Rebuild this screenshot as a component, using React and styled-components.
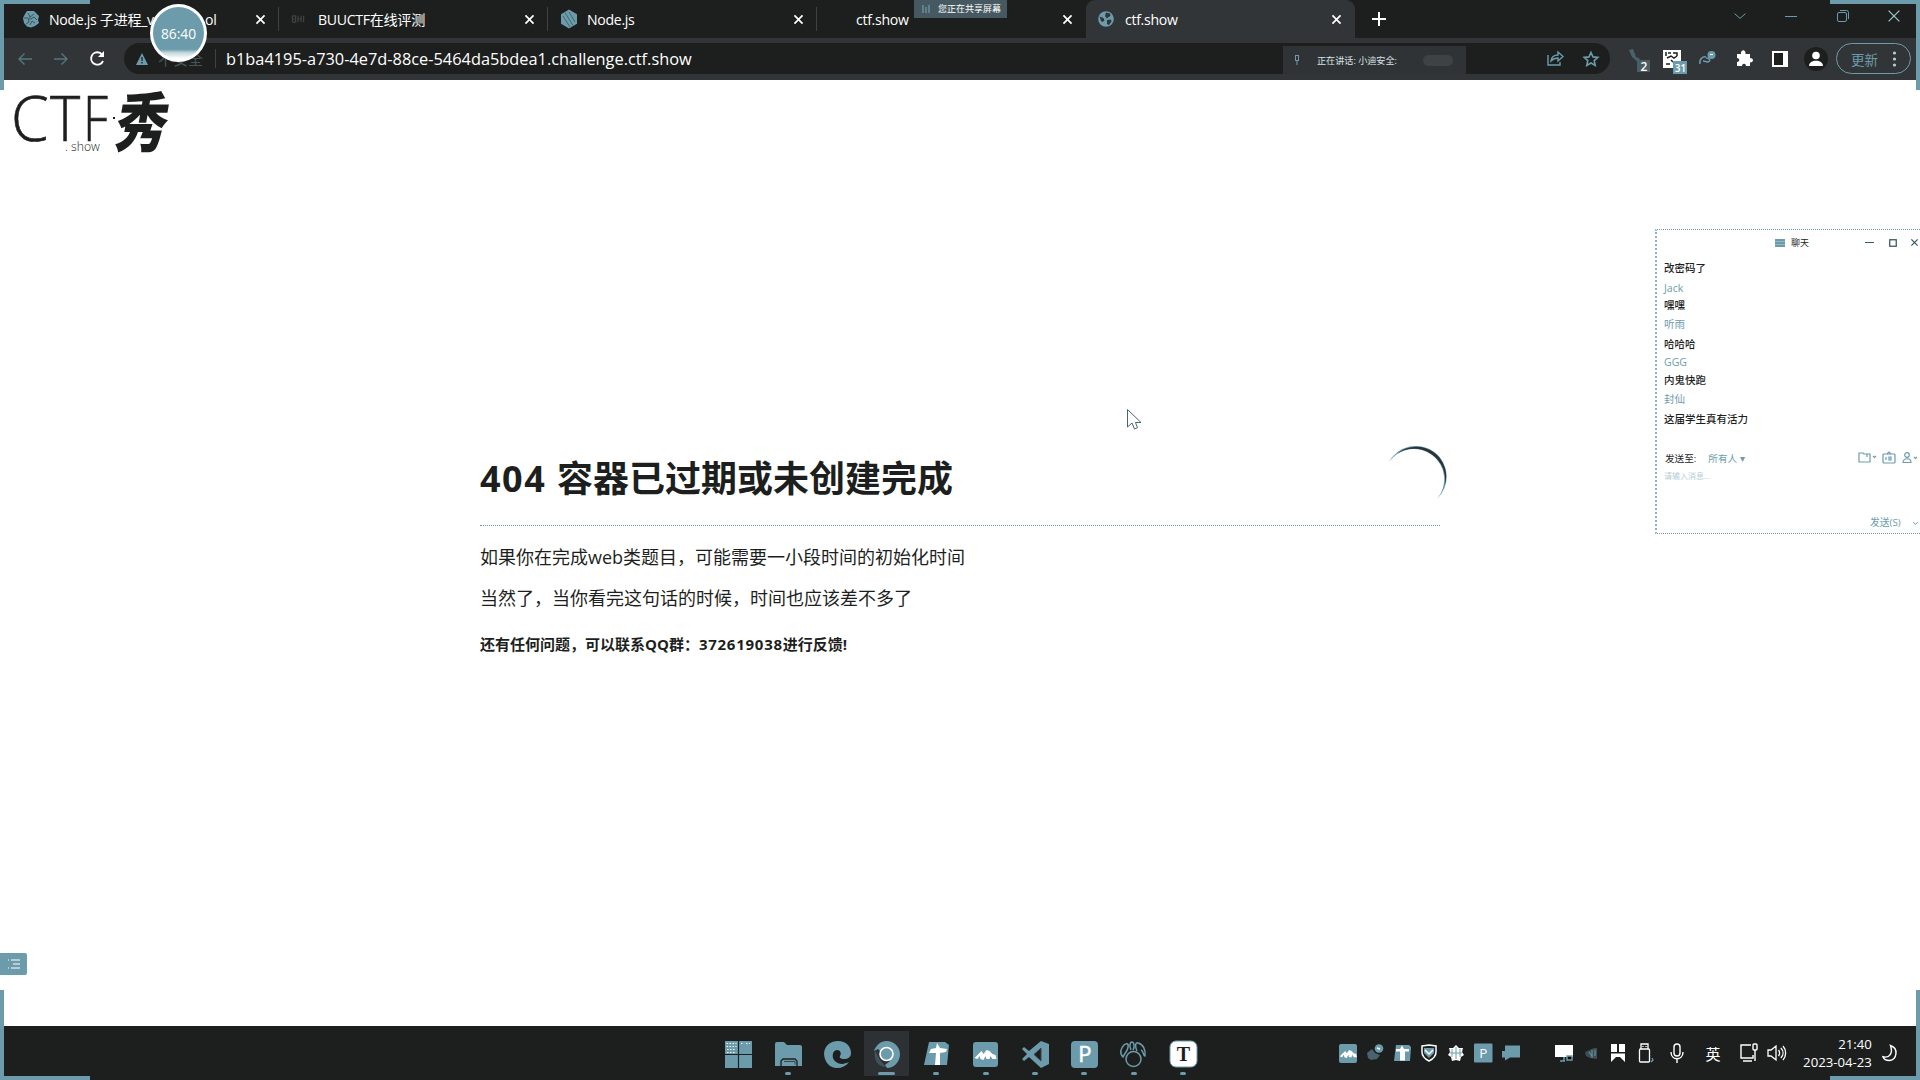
import React from "react";
import styled, { createGlobalStyle } from "styled-components";

const ink = "#1d1f1e";
const grey = "#323537";
const mid = "#3e4245";
const blue = "#6c9cac";
const ui = `"Open Sans", "Noto Sans", "Noto Sans CJK SC", sans-serif`;

const Global = createGlobalStyle`
  * { box-sizing: border-box; }
  html, body { margin: 0; background: #fff; overflow: hidden; }
  body { font-family: ${ui}; color: ${ink}; }
  h1, p { margin: 0; }
  svg { display: block; flex: none; overflow: visible; }
`;

const Screen = styled.div`
  position: relative;
  width: 1920px;
  height: 1080px;
  display: flex;
  flex-direction: column;
  overflow: hidden;
  background: #fff;
`;

/* ---------- browser chrome ---------- */
const TabStrip = styled.header`
  height: 38px;
  flex: none;
  display: flex;
  padding-left: 10px;
  background: ${ink};
`;
const Tab = styled.div`
  width: 269px;
  height: 38px;
  flex: none;
  display: flex;
  align-items: center;
  padding: 0 9px 0 12px;
  color: #fff;
  background: ${(p) => (p.$active ? grey : "transparent")};
  border-radius: 9px 9px 0 0;
`;
const Favicon = styled.div`
  width: 18px;
  margin-right: 9px;
  flex: none;
`;
const TabTitle = styled.span`
  flex: 1;
  display: flex;
  padding-top: 1px;
  white-space: pre;
  font-size: 14.1px;
  line-height: 20px;
  letter-spacing: -0.3px;
`;
const TitleHead = styled.span`
  width: ${(p) => (p.$split ? "156px" : "auto")};
`;
const TabDivider = styled.i`
  width: 1px;
  height: 24px;
  margin: 0 -9px 0 13px;
  background: ${(p) => (p.$hidden ? "transparent" : mid)};
`;
const NewTab = styled.div`
  width: 48px;
  display: grid;
  place-items: center;
`;
const WindowButtons = styled.div`
  margin-left: auto;
  display: flex;
  height: 32px;
`;
const WindowButton = styled.div`
  width: 51.5px;
  display: grid;
  place-items: center;
`;
const Toolbar = styled.div`
  height: 42px;
  flex: none;
  display: flex;
  align-items: center;
  padding: 0 9px 1px 7px;
  background: ${grey};
`;
const Slot = styled.div`
  width: 36px;
  height: 30px;
  flex: none;
  display: grid;
  place-items: center;
`;
const Omnibox = styled.div`
  flex: 1;
  height: 31px;
  margin: 0 8px 0 9px;
  display: flex;
  align-items: center;
  padding: 0 1px 0 12px;
  border-radius: 16px;
  background: ${ink};
`;
const Insecure = styled.span`
  width: 57px;
  margin-left: 10px;
  font-size: 15px;
  color: #47555b;
  white-space: nowrap;
`;
const OmniRule = styled.i`
  width: 1px;
  height: 19px;
  margin-right: 10px;
  background: ${mid};
`;
const Url = styled.span`
  flex: 1;
  color: #fff;
  font-size: 16.35px;
  line-height: 22px;
  white-space: nowrap;
`;
const UpdateButton = styled.div`
  width: 75px;
  height: 31px;
  margin-left: 2px;
  display: flex;
  align-items: center;
  justify-content: space-between;
  padding: 0 14px;
  border: 1px solid ${blue};
  border-radius: 16px;
  color: ${blue};
  font-size: 13.5px;
`;

/* ---------- page ---------- */
const Page = styled.main`
  flex: 1;
  display: flex;
  flex-direction: column;
  align-items: flex-start;
`;
const Logo = styled.div`
  height: 90px;
  width: 190px;
  padding: 0 0 0 11px;
  display: grid;
  grid-template-columns: 104px 60px;
  grid-template-rows: 60px 20px;
`;
const LogoLatin = styled.div`
  display: flex;
  align-items: flex-start;
  font: 300 62px/74px "Open Sans", "Noto Sans", sans-serif;
  -webkit-text-stroke: 0.6px ${ink};
`;
const LogoLetter = styled.span`
  width: ${(p) => p.$w}px;
  transform-origin: left center;
  transform: scaleX(${(p) => p.$sx});
`;
const LogoDot = styled.i`
  width: 2px;
  height: 2px;
  margin: 37px 0 0 1px;
  background: ${ink};
`;
const LogoBrush = styled.span`
  grid-row: 1 / 3;
  grid-column: 2;
  font: 900 56px/78px "Noto Sans CJK SC", sans-serif;
  transform: translate(0, 0) skewX(-10deg) scale(0.93, 1.15);
`;
const LogoShow = styled.span`
  grid-column: 1;
  padding-left: 54px;
  font: 300 12.2px/14px "Open Sans", sans-serif;
  color: ${ink};
  white-space: nowrap;
`;
const Article = styled.article`
  width: 960px;
  margin: 276px 0 0 480px;
  display: flex;
  flex-direction: column;
`;
const Heading = styled.div`
  height: 80px;
  display: flex;
  justify-content: space-between;
  border-bottom: 1px dotted ${blue};
  h1 {
    font-size: 36px;
    line-height: 66px;
    font-weight: 700;
    white-space: pre;
  }
`;
const Wide = styled.span`
  letter-spacing: ${(p) => p.$ls}px;
`;
const Spinner = styled.svg`
  margin-right: -8px;
`;
const Line = styled.p`
  font-size: 18px;
  line-height: 28px;
  margin-top: ${(p) => p.$top}px;
`;
const Contact = styled.p`
  font-size: 15px;
  line-height: 22px;
  margin-top: 21px;
  font-weight: 700;
`;

/* ---------- taskbar ---------- */
const Taskbar = styled.footer`
  height: 54px;
  flex: none;
  display: flex;
  background: ${ink};
  padding-left: 714px;
`;
const AppSlot = styled.div`
  width: 49.4px;
  display: flex;
  flex-direction: column;
  align-items: center;
  padding-top: 5px;
`;
const AppTile = styled.div`
  width: 45px;
  height: 45px;
  display: flex;
  flex-direction: column;
  align-items: center;
  padding-top: 10px;
  background: ${(p) => (p.$active ? "#2e3133" : "transparent")};
`;
const Indicator = styled.i`
  width: ${(p) => p.$w}px;
  height: 3px;
  margin-top: 4px;
  flex: none;
  border-radius: 2px;
  background: ${blue};
`;
const Tray = styled.div`
  display: flex;
  align-items: center;
  margin-left: ${(p) => p.$left}px;
  height: 54px;
`;
const TrayIcon = styled.div`
  width: ${(p) => p.$w || 27}px;
  display: grid;
  place-items: center;
  color: #fff;
  font-size: 15px;
`;
const Clock = styled.div`
  width: 85px;
  margin-right: 8px;
  color: #fff;
  text-align: right;
  font-size: 13.2px;
  line-height: 18px;
  padding-bottom: 1px;
  white-space: nowrap;
`;

/* ---------- floating items ---------- */
const Corner = styled.i`
  position: absolute;
  width: 90px;
  height: 90px;
  border: 0 solid ${blue};
  border-width: ${(p) => p.$edges};
  top: ${(p) => (p.$bottom ? "auto" : 0)};
  bottom: ${(p) => (p.$bottom ? 0 : "auto")};
  left: ${(p) => (p.$right ? "auto" : 0)};
  right: ${(p) => (p.$right ? 0 : "auto")};
`;
const Timer = styled.div`
  position: absolute;
  left: 150px;
  top: 4px;
  width: 57px;
  height: 58px;
  border: 3px solid #fff;
  border-radius: 50%;
  display: grid;
  place-items: center;
  background: linear-gradient(${blue} 78%, #c4d7dd 84%, #fff 94%) border-box;
  color: #fff;
  font-size: 13.8px;
`;
const ShareBadge = styled.div`
  position: absolute;
  left: 914px;
  top: 0;
  width: 93px;
  height: 18px;
  display: flex;
  align-items: center;
  gap: 6px;
  padding: 0 0 1px 8px;
  background: #475960;
  color: #fff;
  font-size: 9px;
  white-space: nowrap;
`;
const Speaking = styled.div`
  position: absolute;
  left: 1283px;
  top: 46px;
  width: 183px;
  height: 28px;
  display: flex;
  align-items: center;
  padding-left: 11px;
  gap: 17px;
  background: #303335;
  color: #d7e3e7;
  font-size: 9.1px;
  white-space: nowrap;
`;
const Blob = styled.i`
  width: 30px;
  height: 11px;
  margin-left: 9px;
  border-radius: 6px;
  background: ${mid};
`;
const SideTab = styled.div`
  position: absolute;
  left: 0;
  top: 953px;
  width: 27px;
  height: 22px;
  display: grid;
  place-items: center;
  border-radius: 0 2px 2px 0;
  background: ${blue};
`;
const Pointer = styled.svg`
  position: absolute;
  left: 1127px;
  top: 409px;
`;
const Chat = styled.aside`
  position: absolute;
  left: 1655px;
  top: 229px;
  width: 275px;
  height: 305px;
  padding: 0 10px 0 7px;
  display: flex;
  flex-direction: column;
  border: 1px dotted ${blue};
  border-left: 2px dotted #8db2bf;
  background: #fff;
`;
const ChatBar = styled.div`
  height: 27px;
  flex: none;
  display: flex;
  align-items: center;
  padding: 0 0 2px 111px;
  font-size: 9px;
  gap: 6px;
  white-space: nowrap;
`;
const ChatName = styled.span`
  width: 18px;
`;
const ChatControls = styled.div`
  display: flex;
  align-items: center;
  gap: 14.5px;
  margin-left: 50px;
`;
const Message = styled.div`
  font-size: 10.5px;
  flex: none;
  height: ${(p) => p.$h}px;
  line-height: ${(p) => p.$h + 1}px;
  color: ${(p) => (p.$name ? blue : ink)};
  font-weight: ${(p) => (p.$name ? 400 : 500)};
  white-space: nowrap;
`;
const SendTo = styled.div`
  height: 24px;
  margin-top: 17px;
  padding-left: 1px;
  display: flex;
  align-items: center;
  font-size: 9.6px;
  white-space: nowrap;
`;
const Recipient = styled.span`
  width: 152px;
  margin-left: 12px;
  color: ${blue};
`;
const ChatTools = styled.div`
  display: flex;
  gap: 5px;
`;
const Placeholder = styled.div`
  font-size: 8px;
  line-height: 12px;
  color: #b5cdd5;
`;
const Send = styled.div`
  margin: 34px 0 0 206px;
  display: flex;
  align-items: center;
  gap: 12px;
  color: ${blue};
  font-size: 9.8px;
  line-height: 14px;
  white-space: nowrap;
`;

const Cross = ({ s = 8, c = "#fff", w = 1.7 }) => (
  <svg width={s} height={s} viewBox="0 0 10 10" stroke={c} strokeWidth={(w * 10) / s}>
    <path d="M0.5.5l9 9M9.5.5l-9 9" />
  </svg>
);
const Chevron = ({ s = 5, c = blue }) => (
  <svg width={s} height={s / 2} viewBox="0 0 10 5" fill="none" stroke={c} strokeWidth={10 / s}>
    <path d="M.5.5l4.5 4 4.5-4" />
  </svg>
);
const Sprocket = () => (
  <svg width="18" height="18" viewBox="0 0 18 18" fill={blue}>
    <path d="M5 1h7l2 2 3 3-1 4 1 3-4 3-4 1.500-4-1L2 13 1 8l2-4z" />
    <path d="M6 3l2 4 4-3M2 8l4 0 1 4-3 2M9 9l3-2 3 3M8 15l2-4 3 2M8 7v3" stroke="#3d535b" fill="none" />
  </svg>
);
const NodeHex = () => (
  <svg width="18" height="20" viewBox="0 0 18 20" fill={blue}>
    <path d="M9 .5l8 4.700v9.600L9 19.500l-8-4.700V5.200z" />
    <path d="M5 3.500l8 13M3 7l7 11M9 3l6 10" stroke="#446571" fill="none" />
  </svg>
);
const Globe = () => (
  <svg width="16" height="16" viewBox="0 0 16 16">
    <circle cx="8" cy="8" r="7.800" fill={blue} />
    <path d="M1.500 5.500l4 1.500 1 2.500-2 1.500L3 10zM8 1.500l4 1 .5 2.500-2 1L9 7.500 7 5zM9 9l4-.5.500 2L11 14l-2-1z" fill={grey} />
  </svg>
);
const Dim = () => (
  <svg width="14" height="8" viewBox="0 0 16 10" stroke={mid} fill="none" strokeWidth="1.500">
    <path d="M1 1v8M1 1h4v4H1h4v4H1M8 1v8M8 5h4M12 1v8M15 1v8" />
  </svg>
);

const Mountain = ({ c = "#fff" }) => (
  <path d="M1 12l4-4 3-3 2 3 3-4 3 1 3 3 3 1 1 4-4 0-2-3-1 3-3 0-1-3-2 4-3-1-1-3-2 3z" fill={c} />
);

const appIcons = [
  { w: 0, art: <><rect width="27" height="27" fill={blue} /><path d="M13.500 0v27M0 13.500h27" stroke={ink} strokeWidth="1.200" /><path d="M1.500 2.500h10M1.500 5.500h10M2 8.500h9M2 11.500h8M16 2.500h3M21 2.500h4" stroke="#fff" strokeWidth="1.200" strokeDasharray="1.500 1.500" /></> },
  { w: 6, art: <><path d="M0 3a2 2 0 012-2h7l3 3h13a2 2 0 012 2v19H0z" fill={blue} /><path d="M6 25v-5l2-2h12l2 2v5" fill="none" stroke={ink} strokeWidth="1.300" /><path d="M9 20.500h11v3" stroke={mid} fill="none" /></> },
  { w: 0, art: <path d="M0 12C1 4 7 0 14 0c8 0 13 5 13 12 0 4-3 6-7 6-3 0-5-1-4-3 2-3 0-6-3-6-5 0-6 9-1 12 4 3 9 2 13 0-3 4-7 6-12 6C6 27 0 21 0 12z" fill={blue} /> },
  { w: 17, active: true, art: <><path d="M13.500 0A13.500 13.500 0 0127 13c0 8-6 14-13 14l-2-3 5-4L5 8 1 10C3 4 8 0 13.500 0z" fill={blue} /><path d="M2 9l5 10 6 7C5 26 0 19 2 9z" fill="#3d535b" /><circle cx="13.500" cy="13" r="6.500" fill={blue} stroke="#fff" strokeWidth="1.600" /></> },
  { w: 6, art: <><path d="M6 1h16l4 3-2 20H1z" fill={blue} /><path d="M14 2l3 5 7 1-1 3-6 1 0 12h-5l1-12-7 0 2-4 5-1z" fill="#fff" /></> },
  { w: 6, art: <><rect x="1" y="1" width="25" height="25" rx="3" fill={blue} /><g transform="translate(1.500 5)"><Mountain /></g></> },
  { w: 6, art: <><path d="M19 0l8 3v20l-8 4L7 16l-5 4-2-2 5-5-5-5 2-2 5 4z" fill={blue} /><path d="M19 7v13l-7-6.500z" fill={ink} stroke={mid} /></> },
  { w: 6, art: <><rect width="27" height="27" rx="4" fill={blue} /><text x="13.800" y="21" textAnchor="middle" fontSize="22" fill="#fff" stroke="#fff" strokeWidth=".5" fontFamily="Open Sans">P</text></> },
  { w: 6, art: <g fill="none" stroke={blue} strokeWidth="1.500"><circle cx="13.500" cy="18" r="7.500" /><path d="M11 9c-2-4-1-8 1-8s3 5 1 8M3 16c-4-4-2-9 1-12 2-2 5-2 4 2 0 4-3 5-5 10zM17 10c-2-4-2-9 1-8 5 1 8 7 7 13-2 0-1-5-4-6" /></g> },
  { w: 6, art: <><rect x="0" y="0" width="27" height="26" rx="6" fill="#fff" stroke={blue} /><text x="13.500" y="20" textAnchor="middle" fontSize="20" fontWeight="700" fill={ink} fontFamily="Liberation Serif">T</text></> },
];

const trayA = [
  <><rect width="18" height="19" rx="2" fill={blue} /><g transform="translate(0 3) scale(.78)"><Mountain /></g></>,
  <><path d="M1 9l5-4 3 4 5 2-3 4-6 1-3-2z" fill="#48636d" /><circle cx="13" cy="4.500" r="4.300" fill={blue} /><path d="M11 4l3 1" stroke="#fff" strokeWidth="1.500" /></>,
  <><path d="M3 1h13l2 2-1 14H1z" fill={blue} /><path d="M9 1.500l2 3.500h5v2.500h-4v9H7v-9H3V5h4z" fill="#fff" /></>,
  <><path d="M2 2l7-1 7 1v6c0 4-3 7-7 9-4-2-7-5-7-9z" fill="none" stroke="#fff" strokeWidth="1.500" /><path d="M4 4h10v5l-5 5-5-5z" fill={blue} /><path d="M5 6l4 4 4-4" stroke="#fff" fill="none" strokeWidth="1.500" /></>,
  <><path d="M9 1l3 3 4 0-1 4 2 3-3 2-1 4-4-1-4 1-1-4-3-2 2-3-1-4h4z" fill="#fff" /><path d="M5 5v8M9 3v12M13 5v8M3 9h12" stroke={blue} strokeWidth="1" /></>,
  <><rect y="-.5" width="18.500" height="19" rx="1" fill={blue} /><text x="9.200" y="14" textAnchor="middle" fontSize="13.500" fill="#fff" fontFamily="Open Sans">P</text></>,
  <><path d="M4 1.500h15v12H9l-5 3v-3H1V7h3z" fill={blue} /></>,
];
const trayB = [
  <><rect x="0" y="1" width="18" height="12" fill="#fff" /><path d="M9 13v4M5 17h5M12 12h5v4h-5z" stroke={blue} strokeWidth="1.500" /></>,
  <><path d="M3 8l9-4h3v11l-7-1-4-2z" fill="#3d4e54" /><path d="M7 8l3 4M10 6v8M13 6v6" stroke={blue} /></>,
  <><path d="M2 0h6v8H2zM10 0h6v8h-6zM2 9.500h14V18l-5-5H7l-5 5z" fill="#fff" /></>,
  <g fill="none" stroke="#fff" strokeWidth="1.300"><path d="M5 5V0h7v5" /><rect x="3.500" y="5" width="10" height="13" rx="1" /><path d="M7 2v1M10 2v1" /><path d="M16 14l1 2-2 2" stroke={blue} /></g>,
];
const TrayArt = ({ children }) => (
  <svg width="18" height="18" viewBox="0 0 18 18">{children}</svg>
);

const tabs = [
  { icon: <Sprocket />, title: "Node.js 子进程_v", tail: "ol" },
  { icon: <Dim />, title: "BUUCTF在线评测" },
  { icon: <NodeHex />, title: "Node.js" },
  { icon: null, title: "ctf.show" },
  { icon: <Globe />, title: "ctf.show", active: true },
];
const messages = [
  ["改密码了", 22], ["Jack", 17, true], ["嘿嘿", 18], ["听雨", 20, true], ["哈哈哈", 19],
  ["GGG", 18, true], ["内鬼快跑", 18], ["封仙", 20, true], ["这届学生真有活力", 20],
];

export default function App() {
  return (
    <Screen>
      <Global />
      <TabStrip>
        {tabs.map((t, i) => (
          <Tab key={i} $active={t.active}>
            <Favicon>{t.icon}</Favicon>
            <TabTitle>
              <TitleHead $split={Boolean(t.tail)}>{t.title}</TitleHead>
              {t.tail}
            </TabTitle>
            <Cross s={9} />
            <TabDivider $hidden={i > 2} />
          </Tab>
        ))}
        <NewTab>
          <svg width="14" height="14" viewBox="0 0 14 14" stroke="#fff" strokeWidth="2"><path d="M7 0v14M0 7h14" /></svg>
        </NewTab>
        <WindowButtons>
          <WindowButton><Chevron s={12} /></WindowButton>
          <WindowButton><svg width="12" height="1"><rect width="12" height="1" fill={blue} /></svg></WindowButton>
          <WindowButton>
            <svg width="12" height="12" viewBox="0 0 12 12" fill="none" stroke={blue}>
              <rect x=".5" y="2.500" width="9" height="9" rx="1.500" /><path d="M3 .5h6.500a2 2 0 012 2V9" />
            </svg>
          </WindowButton>
          <WindowButton><Cross s={12} c="#9dbfca" w={1.3} /></WindowButton>
        </WindowButtons>
      </TabStrip>

      <Toolbar>
        <Slot><svg width="14" height="12" viewBox="0 0 14 12" fill="none" stroke="#557580" strokeWidth="1.400"><path d="M14 6H1M6.500.5L1 6l5.500 5.500" /></svg></Slot>
        <Slot><svg width="14" height="12" viewBox="0 0 14 12" fill="none" stroke="#557580" strokeWidth="1.400"><path d="M0 6h13M7.500.5L13 6l-5.500 5.500" /></svg></Slot>
        <Slot>
          <svg width="15" height="15" viewBox="0 0 15 15" fill="none" stroke="#fff" strokeWidth="1.900"><path d="M13 10A6.200 6.200 0 117.500 1.200c2 0 3.500 1 5 2.800" /><path d="M14 0v6H8z" fill="#fff" stroke="none" /></svg>
        </Slot>
        <Omnibox>
          <svg width="12" height="12" viewBox="0 0 12 12"><path d="M6 0l6 12H0z" fill={blue} /><path d="M6 4v4M6 9v1.500" stroke={ink} strokeWidth="1.300" /></svg>
          <Insecure>不安全</Insecure>
          <OmniRule />
          <Url>b1ba4195-a730-4e7d-88ce-5464da5bdea1.challenge.ctf.show</Url>
          <Slot>
            <svg width="17" height="15" viewBox="0 0 17 15" fill="none" stroke={blue} strokeWidth="1.400"><path d="M1 4v10h12v-3M4 10c.500-4 3-6 7-6V1l5 4.500-5 4.500V7C8 7 6 8 4 10z" /></svg>
          </Slot>
          <Slot>
            <svg width="16" height="16" viewBox="0 0 16 16" fill="none" stroke={blue} strokeWidth="1.600"><path d="M8 1.500l2 4.400 4.800.500-3.600 3.200 1 4.800L8 12l-4.200 2.400 1-4.800L1.200 6.400 6 5.900z" /></svg>
          </Slot>
        </Omnibox>
        <Slot>
          <svg width="24" height="26" viewBox="0 0 24 26"><path d="M5 4l4-1 3 8 4 2-2 3-6-5z" fill="#48636d" /><rect x="13" y="14" width="13" height="12" fill="#4c5c63" /><text x="20" y="24.500" textAnchor="middle" fontSize="12" fontWeight="600" fill="#fff" fontFamily="Open Sans">2</text></svg>
        </Slot>
        <Slot>
          <svg width="24" height="26" viewBox="0 0 24 26"><rect x="3" y="4" width="18" height="18" fill="#fff" /><path d="M6 6v4M8 7h3M13 7h4v3M7 12l4-2 3 2 3-2M6 18h4M11 14l2 2" stroke={ink} strokeWidth="1.500" fill="none" /><rect x="13" y="15" width="14" height="13" fill={blue} /><text x="20.500" y="25.500" textAnchor="middle" fontSize="10" fontWeight="600" fill="#fff" fontFamily="Open Sans">31</text></svg>
        </Slot>
        <Slot>
          <svg width="18" height="14" viewBox="0 0 18 14"><path d="M1 12c-1-5 3-8 6-7M7 6c4 0 5 3 2 4L4 9" stroke={blue} strokeWidth="1.500" fill="none" /><circle cx="12.500" cy="3" r="4" fill={blue} /><path d="M11 2.500h3" stroke="#fff" /></svg>
        </Slot>
        <Slot>
          <svg width="17" height="17" viewBox="0 0 17 17" fill="#fff"><path d="M1 4h4c-.5-5 5-5 4.500 0H14v4c4 0 4 4.500 0 4.500V16h-4c0-3-4-3-4 0H1v-4c3 0 3-4 0-4z" /></svg>
        </Slot>
        <Slot><svg width="16" height="16" viewBox="0 0 16 16"><rect x="1" y="1" width="14" height="14" fill={ink} stroke="#fff" strokeWidth="2" /><rect x="11" width="5" height="16" fill="#fff" /></svg></Slot>
        <Slot><svg width="24" height="24" viewBox="0 0 24 24"><circle cx="12" cy="12" r="12" fill={ink} /><circle cx="12" cy="8.500" r="3.800" fill="#fff" /><path d="M5 19c0-7 14-7 14 0z" fill="#fff" /></svg></Slot>
        <UpdateButton>
          更新
          <svg width="3" height="16" viewBox="0 0 3 16" fill="#b5ced6"><circle cx="1.500" cy="2" r="1.600" /><circle cx="1.500" cy="8" r="1.600" /><circle cx="1.500" cy="14" r="1.600" /></svg>
        </UpdateButton>
      </Toolbar>

      <Page>
        <Logo>
          <LogoLatin>
            <LogoLetter $w={40} $sx={0.98}>C</LogoLetter>
            <LogoLetter $w={33} $sx={0.93}>T</LogoLetter>
            <LogoLetter $w={29} $sx={0.8}>F</LogoLetter>
            <LogoDot />
          </LogoLatin>
          <LogoBrush>秀</LogoBrush>
          <LogoShow>. show</LogoShow>
        </Logo>
        <Article>
          <Heading>
            <h1><Wide $ls={1.5}>404 </Wide>容器已过期或未创建完成</h1>
            <Spinner width="64" height="64" viewBox="0 0 64 64">
              <path d="M5 16A30.700 30.700 0 1 1 53 53A30.340 30.340 0 1 0 5 16z" fill={blue} />
              <path d="M13 8A29.650 29.650 0 0 1 60.500 40A31 31 0 0 0 13 8z" fill="#2c3437" />
            </Spinner>
          </Heading>
          <Line $top={17}>如果你在完成web类题目，可能需要一小段时间的初始化时间</Line>
          <Line $top={13}>当然了，当你看完这句话的时候，时间也应该差不多了</Line>
          <Contact>还有任何问题，可以联系QQ群：<Wide $ls={0.75}>372619038</Wide>进行反馈!</Contact>
        </Article>
      </Page>

      <Taskbar>
        {appIcons.map((a, i) => (
          <AppSlot key={i}>
            <AppTile $active={a.active}>
              <svg width="27" height="27" viewBox="0 0 27 27">{a.art}</svg>
              <Indicator $w={a.w} />
            </AppTile>
          </AppSlot>
        ))}
        <Tray $left={127}>
          {trayA.map((art, i) => <TrayIcon key={i}><TrayArt>{art}</TrayArt></TrayIcon>)}
        </Tray>
        <Tray $left={27}>
          {trayB.map((art, i) => <TrayIcon key={i}><TrayArt>{art}</TrayArt></TrayIcon>)}
          <TrayIcon $w={36}>
            <svg width="14" height="20" viewBox="0 0 14 20" fill="none" stroke="#fff" strokeWidth="1.400"><rect x="4" y="1" width="6" height="12" rx="3" /><path d="M1 9c0 9 12 9 12 0M7 16v4" /></svg>
          </TrayIcon>
          <TrayIcon $w={36}>英</TrayIcon>
          <TrayIcon $w={36}>
            <svg width="18" height="18" viewBox="0 0 18 18" fill="none" stroke="#fff" strokeWidth="1.400"><path d="M11 1H1v13h12v-3M3 17h9" /><rect x="13" y="0" width="4" height="6" rx="1" /><path d="M15 6v11" /></svg>
          </TrayIcon>
          <TrayIcon $w={20}>
            <svg width="19" height="16" viewBox="0 0 19 16" fill="none" stroke="#fff" strokeWidth="1.300"><path d="M1 5v6h3l5 4V1L4 5zM11.500 5c1.500 2 1.500 4 0 6M13.800 3c3 3 3 7 0 10M16 1c3.500 4 3.500 10 0 14" /></svg>
          </TrayIcon>
          <Clock>21:40<br />2023-04-23</Clock>
          <TrayIcon $w={20}>
            <svg width="15" height="18" viewBox="0 0 16 18" fill="none" stroke="#fff" strokeWidth="1.500"><path d="M9 1c9 3 7 15-1 16-3 0-6-1-7-4 7 2 11-4 8-12z" /></svg>
          </TrayIcon>
        </Tray>
      </Taskbar>

      <Timer>86:40</Timer>
      <ShareBadge>
        <svg width="10" height="10" viewBox="0 0 10 10" stroke={blue} strokeWidth="1.200"><path d="M1 1v8M4 3v6M7 1v8" /></svg>
        您正在共享屏幕
      </ShareBadge>
      <Speaking>
        <svg width="6" height="10" viewBox="0 0 6 10" stroke={blue} fill="none"><rect x="1.500" y=".5" width="3" height="5" /><path d="M3 6v4" /></svg>
        正在讲话: 小迪安全:
        <Blob />
      </Speaking>
      <SideTab>
        <svg width="12" height="10" viewBox="0 0 12 10" stroke="#fff" strokeWidth="1.200"><path d="M3 1h9M5 5h7M3 9h9M0 1h1M0 9h1" /></svg>
      </SideTab>

      <Chat>
        <ChatBar>
          <svg width="10" height="8" viewBox="0 0 10 8"><rect width="10" height="8" fill={blue} /><path d="M0 2.500h10M0 5.500h10" stroke="#a5c3cd" strokeWidth=".7" /></svg>
          <ChatName>聊天</ChatName>
          <ChatControls>
            <svg width="9" height="1"><rect width="9" height="1" fill="#3d5a64" /></svg>
            <svg width="8" height="8"><rect x=".75" y=".75" width="6.500" height="6.500" fill="none" stroke="#3d5a64" strokeWidth="1.300" /></svg>
            <Cross s={7} c="#3d5a64" w={1.3} />
          </ChatControls>
        </ChatBar>
        {messages.map(([text, h, name], i) => (
          <Message key={i} $h={h} $name={name}>{text}</Message>
        ))}
        <SendTo>
          发送至:
          <Recipient>所有人 ▾</Recipient>
          <ChatTools>
            <svg width="19" height="11" viewBox="0 0 19 11" fill="none" stroke={blue} strokeWidth="1.200"><path d="M1 1h4l1 1h6v8H1zM9 5V2M15 4l1.500 1.500L18 4" /></svg>
            <svg width="14" height="12" viewBox="0 0 14 12" fill="none" stroke={blue} strokeWidth="1.200"><rect x="1" y="2" width="12" height="9" rx="1" /><path d="M5 2l2-2 2 2M4 5v3M7 5h2v3H7z" /></svg>
            <svg width="18" height="11" viewBox="0 0 18 11" fill="none" stroke={blue} strokeWidth="1.200"><circle cx="6" cy="3" r="2.300" /><path d="M2 10.500c0-5 8-5 8 0zM13 5l1.500 1.500L16 5" /></svg>
          </ChatTools>
        </SendTo>
        <Placeholder>请输入消息…</Placeholder>
        <Send>发送(S) <Chevron s={5} /></Send>
      </Chat>

      <Pointer width="15" height="21" viewBox="0 0 15 21">
        <path d="M.5.500v17.500L5 14l2.500 6 3-1.300L8.500 13.500h5.500z" fill="#fff" stroke="#49656f" />
      </Pointer>
      <Corner $edges="4px 0 0 4px" />
      <Corner $right $edges="4px 4px 0 0" />
      <Corner $bottom $edges="0 0 4px 4px" />
      <Corner $right $bottom $edges="0 4px 4px 0" />
    </Screen>
  );
}
